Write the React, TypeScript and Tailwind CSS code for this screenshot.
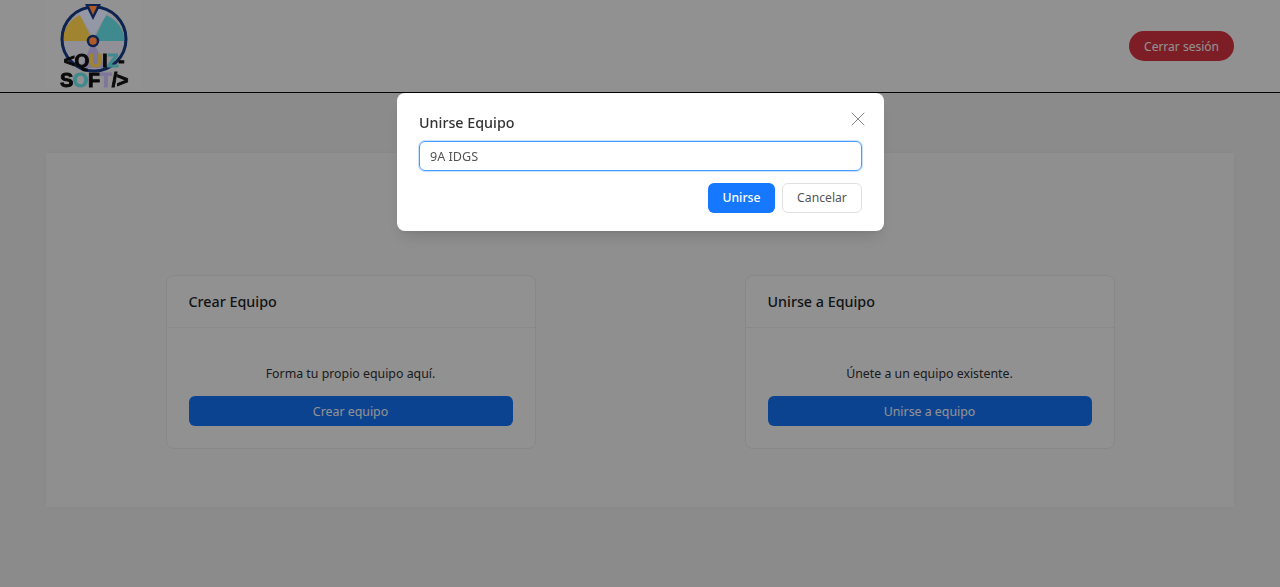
import { X } from "lucide-react";

function Logo() {
  return (
    <svg viewBox="0 0 96 92" className="h-[92px] w-[96px] blur-[0.6px]">
      <circle cx="48" cy="39" r="31" fill="#909096" />
      <path d="M47 41 L34 15 A31 31 0 0 0 16 41 Z" fill="#a0842f" />
      <path d="M47 41 L60 15 A31 31 0 0 1 79 41 Z" fill="#3f8a8e" />
      <path d="M47 41 L35 68 H60 Z" fill="#7f769c" />
      <path d="M30 9 H64 L47 36 Z" fill="#9497a6" />
      <circle cx="48" cy="39" r="32" fill="none" stroke="#0e2350" strokeWidth="3" />
      <path d="M39 4 H55 L47 20 Z" fill="#0e2350" />
      <path d="M43 6 H51 L47 15 Z" fill="#b05a28" />
      <circle cx="47" cy="41" r="5" fill="#b05a28" stroke="#0e2350" strokeWidth="2.5" />
      <text x="48" y="67" textAnchor="middle" fontFamily="Liberation Sans, sans-serif" fontWeight="700" fontSize="19" letterSpacing="-0.4" stroke="#0a0a0a" strokeWidth="0.9" fill="#0a0a0a">
        {"<"}Q
        <tspan fill="#a0842f" stroke="#a0842f">U</tspan>
        I
        <tspan fill="#3f8a8e" stroke="#3f8a8e">Z</tspan>
        {"-"}
      </text>
      <text x="48" y="87" textAnchor="middle" fontFamily="Liberation Sans, sans-serif" fontWeight="700" fontSize="20" letterSpacing="-0.4" stroke="#0a0a0a" strokeWidth="0.9" fill="#0a0a0a">
        S<tspan fill="#3f8a8e" stroke="#3f8a8e">O</tspan>F<tspan fill="#7f769c" stroke="#7f769c">T</tspan>/{">"}
      </text>
    </svg>
  );
}

function TeamCard({ title, text, action }: { title: string; text: string; action: string }) {
  return (
    <div className="mx-auto h-[174px] w-[370px] rounded-lg border border-[#f0f0f0] bg-white">
      <div className="flex h-[52px] items-center border-b border-[#f2f2f2] px-[22px] text-[14.3px] font-medium text-[#212529]">
        {title}
      </div>
      <div className="px-[22px] pt-9 text-center">
        <p className="text-[12.35px] leading-5 text-[#333]">{text}</p>
        <button className="mt-3 h-[30px] w-full rounded-md bg-[#1677ff] pt-[2px] text-[12.35px] text-white">{action}</button>
      </div>
    </div>
  );
}

export default function App() {
  return (
    <div className="relative h-[587px] overflow-hidden bg-[#f5f5f5] font-['Noto_Sans','Open_Sans',sans-serif]">
      <header className="flex h-[93px] items-center justify-between border-b border-black bg-white px-[46px]">
        <div className="relative z-10 h-[92px] w-[96px] bg-[#929292]">
          <Logo />
        </div>
        <button className="h-[30px] w-[105px] rounded-full bg-[#dc3545] pt-px text-[12px] text-white">Cerrar sesión</button>
      </header>

      <main className="mx-[46px] mt-[60px] grid h-[354px] grid-cols-2 bg-[#fbfbfb] px-[15px] pt-[122px] shadow-[0_0_6px_rgba(0,0,0,0.04)]">
        <TeamCard title="Crear Equipo" text="Forma tu propio equipo aquí." action="Crear equipo" />
        <TeamCard title="Unirse a Equipo" text="Únete a un equipo existente." action="Unirse a equipo" />
      </main>

      <div className="fixed inset-0 flex justify-center bg-black/[.43] pl-px">
        <div className="relative mt-[93px] h-[138px] w-[487px] rounded-lg bg-white px-[22px] pt-5 shadow-lg">
          <button className="absolute right-[14px] top-[14px] text-[#888]">
            <X size={24} strokeWidth={1} />
          </button>
          <h2 className="text-[14.3px] font-medium leading-5 text-[#333]">Unirse Equipo</h2>
          <input
            readOnly
            value="9A IDGS"
            className="mt-2 h-[30px] w-full rounded-md border border-[#4a9bff] px-[10px] text-[12.6px] text-[#555] outline-none ring-1 ring-[#4a9bff]/30"
          />
          <div className="mt-3 flex justify-end gap-[7px]">
            <button className="h-[30px] w-[67px] rounded-md bg-[#1677ff] text-[12.2px] font-medium text-white">Unirse</button>
            <button className="h-[30px] w-[80px] rounded-md border border-[#e0e0e0] bg-white text-[12.2px] text-[#555]">Cancelar</button>
          </div>
        </div>
      </div>
    </div>
  );
}
